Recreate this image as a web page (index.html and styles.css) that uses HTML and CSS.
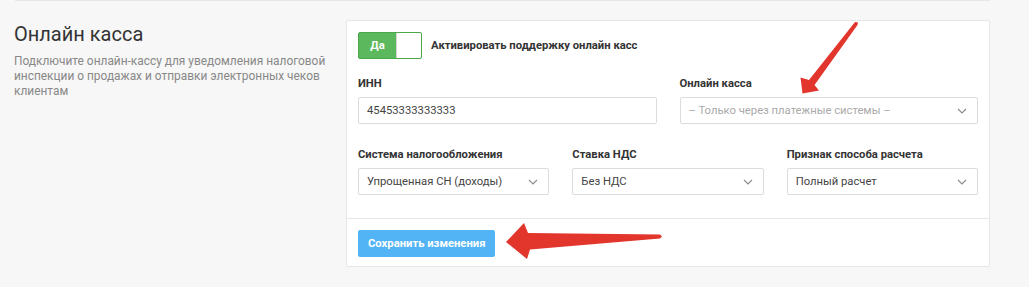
FILE: index.html
```html
<!DOCTYPE html>
<html lang="ru">
<head>
    <meta charset="UTF-8">
    <meta name="viewport" content="width=device-width, initial-scale=1.0">
    <title>Онлайн касса</title>
    <link rel="stylesheet" href="styles.css">
</head>
<body>
    <div class="section">
        <div class="section-info">
            <h2>Онлайн касса</h2>
            <p>Подключите онлайн-кассу для уведомления налоговой инспекции о продажах и отправки электронных чеков клиентам</p>
        </div>

        <div class="card">
            <div class="card-body">
                <div class="switch-row">
                    <div class="switch">
                        <span class="switch-on">Да</span>
                        <span class="switch-knob"></span>
                    </div>
                    <span class="switch-label">Активировать поддержку онлайн касс</span>
                </div>

                <div class="row row-2">
                    <div class="field">
                        <label>ИНН</label>
                        <input class="input" type="text" value="45453333333333">
                    </div>
                    <div class="field">
                        <label>Онлайн касса</label>
                        <div class="select placeholder">
                            <span>– Только через платежные системы –</span>
                            <svg class="chevron" width="10" height="6" viewBox="0 0 10 6"><path d="M1 1l4 4 4-4" fill="none" stroke="#8a8a8a" stroke-width="1.1"/></svg>
                        </div>
                    </div>
                </div>

                <div class="row row-3">
                    <div class="field">
                        <label>Система налогообложения</label>
                        <div class="select">
                            <span>Упрощенная СН (доходы)</span>
                            <svg class="chevron" width="10" height="6" viewBox="0 0 10 6"><path d="M1 1l4 4 4-4" fill="none" stroke="#8a8a8a" stroke-width="1.1"/></svg>
                        </div>
                    </div>
                    <div class="field">
                        <label>Ставка НДС</label>
                        <div class="select">
                            <span>Без НДС</span>
                            <svg class="chevron" width="10" height="6" viewBox="0 0 10 6"><path d="M1 1l4 4 4-4" fill="none" stroke="#8a8a8a" stroke-width="1.1"/></svg>
                        </div>
                    </div>
                    <div class="field">
                        <label>Признак способа расчета</label>
                        <div class="select">
                            <span>Полный расчет</span>
                            <svg class="chevron" width="10" height="6" viewBox="0 0 10 6"><path d="M1 1l4 4 4-4" fill="none" stroke="#8a8a8a" stroke-width="1.1"/></svg>
                        </div>
                    </div>
                </div>
            </div>

            <div class="card-footer">
                <button class="btn-save">Сохранить изменения</button>
            </div>
        </div>
    </div>

    <!-- annotation arrows drawn over the screenshot -->
    <svg class="annotations" width="1029" height="287" viewBox="0 0 1029 287">
        <polygon class="arrow" points="802.5,93.5 800.5,77.5 809,80 855,22 858,22.5 857.5,25 814.5,85 819,90.5"/>
        <polygon class="arrow" points="506,242 524,223 528,233 660,234.5 662,236.5 660,238.5 530,249.5 527,259"/>
    </svg>
</body>
</html>
```

FILE: styles.css
```css
* {
    margin: 0;
    padding: 0;
    box-sizing: border-box;
}

body {
    font-family: 'Roboto', 'Liberation Sans', sans-serif;
    background-color: #f7f7f7;
    color: #333;
    font-size: 12px;
    position: relative;
    height: 287px;
    overflow: hidden;
}

.section {
    display: flex;
    margin: 0 39px 0 15px;
    padding-top: 19px;
    border-top: 1px solid #e7e7e7;
}

.section-info {
    width: 332px;
    margin-left: -1px;
}

.section-info h2 {
    font-size: 20px;
    font-weight: 400;
    color: #333;
    margin-top: 3px;
    line-height: 23px;
}

.section-info p {
    max-width: 320px;
    margin-top: 8px;
    font-size: 11.9px;
    line-height: 15px;
    color: #888;
}

.card {
    flex: 1;
    background-color: #fff;
    border: 1px solid #e6e6e6;
    border-radius: 2px;
    font-size: 11.25px;
}

.card-body {
    padding: 11px 11px 23px 11px;
}

.switch-row {
    display: flex;
    align-items: center;
}

.switch {
    display: flex;
    width: 64px;
    height: 27px;
    border: 1px solid #4aa84a;
    border-radius: 2px;
    background-color: #5cb85c;
    overflow: hidden;
}

.switch-on {
    width: 37px;
    line-height: 25px;
    text-align: center;
    color: #fff;
    font-weight: 700;
}

.switch-knob {
    flex: 1;
    background-color: #fff;
    border-left: 1px solid #d5d5d5;
}

.switch-label {
    margin-left: 9px;
    font-weight: 700;
    color: #333;
}

.row {
    display: grid;
    gap: 23px;
}

.row-2 {
    grid-template-columns: 1fr 1fr;
    margin-top: 17px;
}

.row-3 {
    grid-template-columns: 1fr 1fr 1fr;
    margin-top: 23px;
}

.field label {
    display: block;
    font-weight: 700;
    line-height: 15px;
    margin-bottom: 6px;
    color: #333;
}

.input,
.select {
    width: 100%;
    height: 27px;
    border: 1px solid #dcdcdc;
    border-radius: 2px;
    padding: 0 8px;
    font-family: inherit;
    font-size: 11.25px;
    color: #444;
    background-color: #fff;
}

.input {
    outline: none;
}

.select {
    display: flex;
    align-items: center;
    justify-content: space-between;
}

.select.placeholder {
    color: #aaa;
}

.chevron {
    margin-right: 2px;
}

.card-footer {
    border-top: 1px solid #e8e8e8;
    padding: 11px 11px 9px 11px;
}

.btn-save {
    height: 27px;
    padding: 0 10px;
    border: none;
    border-radius: 2px;
    background-color: #52b4f4;
    color: #fff;
    font-family: inherit;
    font-size: 11.25px;
    font-weight: 700;
}

.annotations {
    position: absolute;
    top: 0;
    left: 0;
    pointer-events: none;
}

.arrow {
    fill: #e2352c;
}
```
